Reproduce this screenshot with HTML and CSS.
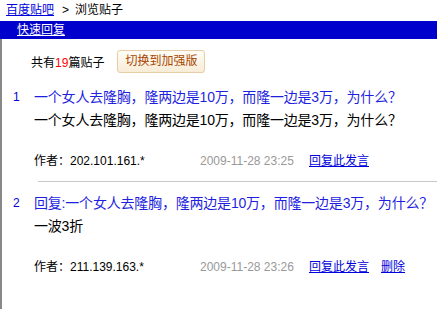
FILE: index.html
```html
<!DOCTYPE html>
<html lang="zh-CN">
<head>
	<meta charset="UTF-8">
	<title>浏览贴子</title>
	<link rel="stylesheet" href="styles.css">
</head>
<body>
	<div class="crumb">
		<a href="javascript:;">百度贴吧</a><span class="arrow">&gt;</span><span>浏览贴子</span>
	</div>
	<div class="bar">
		<a href="javascript:;">快速回复</a>
	</div>
	<div class="content">
		<div class="count">
			<span>共有<em>19</em>篇贴子</span>
			<a class="btn" href="javascript:;">切换到加强版</a>
		</div>

		<div class="post">
			<div class="num">1</div>
			<div class="main">
				<div class="title">一个女人去隆胸，隆两边是10万，而隆一边是3万，为什么？</div>
				<div class="text">一个女人去隆胸，隆两边是10万，而隆一边是3万，为什么？</div>
				<div class="meta">
					<span class="author">作者：202.101.161.*</span><span class="date">2009-11-28 23:25</span><a href="javascript:;">回复此发言</a>
				</div>
			</div>
		</div>
		<div class="divider"></div>

		<div class="post">
			<div class="num">2</div>
			<div class="main">
				<div class="title">回复:一个女人去隆胸，隆两边是10万，而隆一边是3万，为什么？</div>
				<div class="text">一波3折</div>
				<div class="meta">
					<span class="author">作者：211.139.163.*</span><span class="date">2009-11-28 23:26</span><a href="javascript:;">回复此发言</a><a href="javascript:;">删除</a>
				</div>
			</div>
		</div>
	</div>
</body>
</html>
```

FILE: styles.css
```css
*{
	margin:0;
	padding:0;
}
body{
	font-family:"Liberation Sans","Noto Sans CJK SC",sans-serif;
	font-size:12px;
	color:#000;
	background:#fff;
	overflow:hidden;
}
a{
	color:#0000dd;
	text-decoration:underline;
}
.crumb{
	height:21px;
	line-height:21px;
	padding-left:6px;
}
.crumb .arrow{
	margin:0 6px 0 8px;
}
.bar{
	height:18px;
	line-height:18px;
	background:#0000cc;
	padding-left:17px;
}
.bar a{
	color:#fff;
}
.content{
	border-left:2px solid #888;
	min-height:270px;
	padding-top:11px;
}
.count{
	display:flex;
	align-items:center;
	padding-left:29px;
	height:23px;
}
.count em{
	font-style:normal;
	color:#f00;
}
.btn{
	display:inline-block;
	margin-left:13px;
	width:86px;
	height:21px;
	line-height:21px;
	text-align:center;
	border:1px solid #e6cda6;
	border-radius:3px;
	background:linear-gradient(#fffdf6,#f7ecd6);
	color:#a94500;
	text-decoration:none;
}
.post{
	display:flex;
	padding-top:13px;
	padding-bottom:10px;
}
.divider + .post{
	padding-top:10px;
}
.num{
	flex:none;
	width:21px;
	padding-left:11px;
	line-height:22px;
	color:#0000dd;
}
.main{
	flex:1;
	min-width:0;
}
.title{
	font-size:14px;
	line-height:22px;
	color:#1f1fe0;
	white-space:nowrap;
	letter-spacing:-0.2px;
}
.text{
	font-size:14px;
	line-height:22px;
	margin-top:1px;
	white-space:nowrap;
	letter-spacing:-0.2px;
}
.meta{
	margin-top:20px;
	line-height:20px;
}
.author{
	display:inline-block;
	width:166px;
}
.date{
	display:inline-block;
	width:109px;
	color:#999;
}
.meta a{
	margin-right:12px;
}
.divider{
	margin-left:36px;
	border-top:1px solid #c8c8c8;
}
```
